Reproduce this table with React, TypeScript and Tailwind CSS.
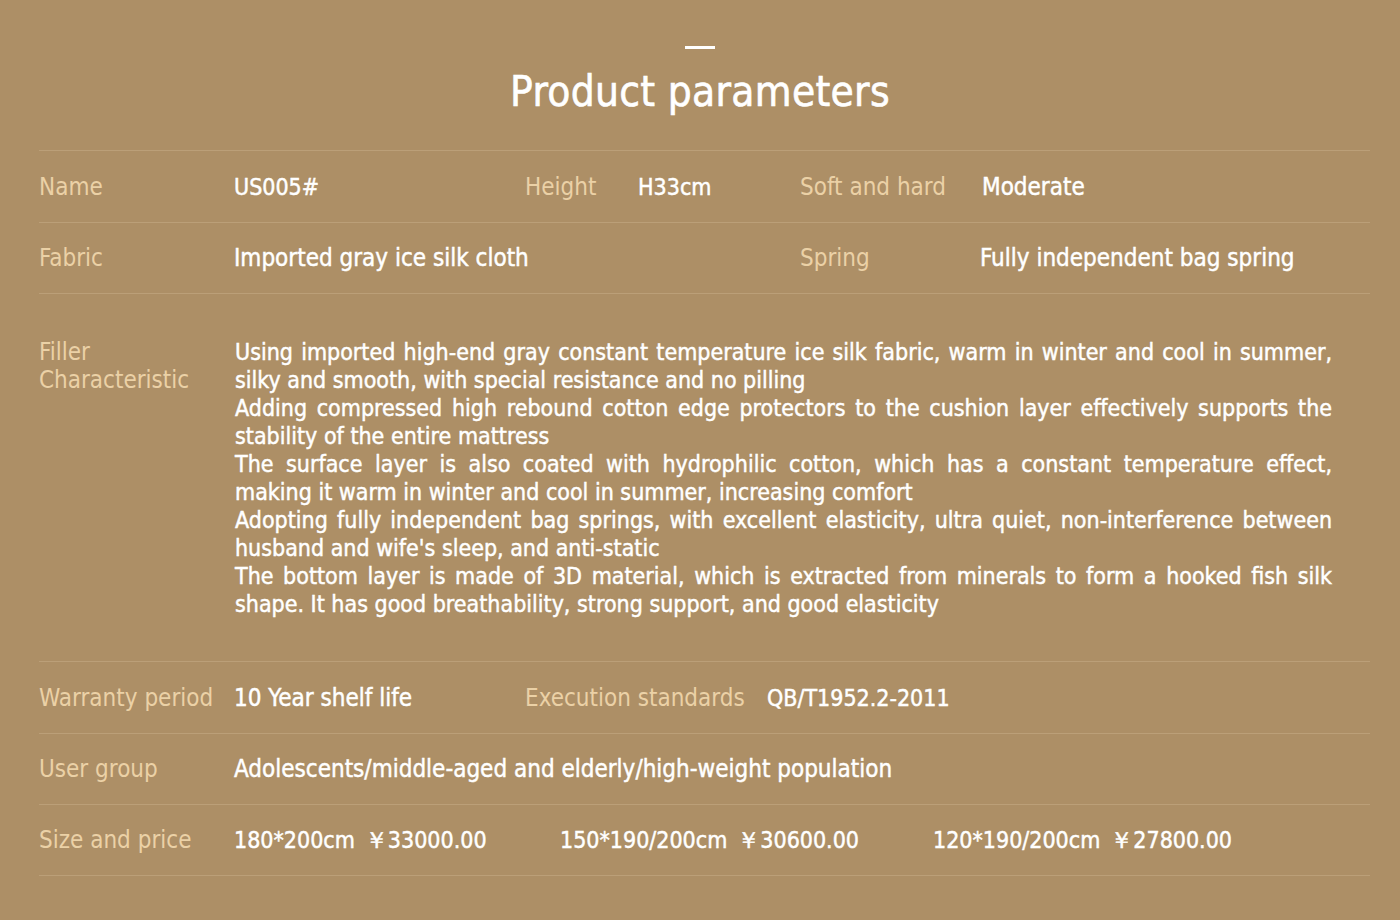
const label = 'text-[#ebd1a6] text-[24px]'
const value = 'text-white text-[24px] [-webkit-text-stroke:0.45px_white]'
const num = 'text-white text-[23px] [-webkit-text-stroke:0.45px_white]'

function Row({ children, className = '' }: { children: React.ReactNode; className?: string }) {
  return <div className={`flex items-center border-b border-[#bb9f78] ${className}`}>{children}</div>
}

// line breaks kept as in the original layout, full lines justified
const filler: [string, boolean][] = [
  ['Using imported high-end gray constant temperature ice silk fabric, warm in winter and cool in summer,', true],
  ['silky and smooth, with special resistance and no pilling', false],
  ['Adding compressed high rebound cotton edge protectors to the cushion layer effectively supports the', true],
  ['stability of the entire mattress', false],
  ['The surface layer is also coated with hydrophilic cotton, which has a constant temperature effect,', true],
  ['making it warm in winter and cool in summer, increasing comfort', false],
  ['Adopting fully independent bag springs, with excellent elasticity, ultra quiet, non-interference between', true],
  ["husband and wife's sleep, and anti-static", false],
  ['The bottom layer is made of 3D material, which is extracted from minerals to form a hooked fish silk', true],
  ['shape. It has good breathability, strong support, and good elasticity', false],
]

function Price({ size, price, w }: { size: string; price: string; w: string }) {
  return (
    <span className={`flex ${w} ${num}`}>
      <span>{size}</span>
      <span className="ml-[10px]">￥{price}</span>
    </span>
  )
}

export default function App() {
  return (
    <div
      className="w-[1400px] h-[920px] bg-[#ad8f66] leading-[28px]"
      style={{ fontFamily: '"DejaVu Sans Condensed", "Liberation Sans Narrow", Roboto, sans-serif' }}
    >
      <div className="flex flex-col items-center pt-[46px]">
        <div className="w-[30px] h-[3px] bg-white" />
        <h1 className="mt-[18px] text-[42px] leading-[50px] text-white tracking-[0.3px] [-webkit-text-stroke:0.6px_white]">
          Product parameters
        </h1>
      </div>

      <div className="ml-[39px] mr-[30px] mt-[33px] border-t border-[#bb9f78]">
        <Row className="h-[72px]">
          <span className={`w-[195px] ${label}`}>Name</span>
          <span className={`w-[291px] ${num}`}>US005#</span>
          <span className={`w-[113px] ${label}`}>Height</span>
          <span className={`w-[162px] ${num}`}>H33cm</span>
          <span className={`w-[182px] ${label}`}>Soft and hard</span>
          <span className={value}>Moderate</span>
        </Row>
        <Row className="h-[71px]">
          <span className={`w-[195px] ${label}`}>Fabric</span>
          <span className={`w-[566px] ${value}`}>Imported gray ice silk cloth</span>
          <span className={`w-[180px] ${label}`}>Spring</span>
          <span className={value}>Fully independent bag spring</span>
        </Row>
        <Row className="h-[368px]">
          <div className={`w-[196px] self-start pt-[44px] ${label}`}>
            <div>Filler</div>
            <div>Characteristic</div>
          </div>
          <div className="w-[1097px] text-white text-[23px] [-webkit-text-stroke:0.45px_white]">
            {filler.map(([t, full]) => (
              <p key={t} className={`whitespace-nowrap ${full ? 'text-justify [text-align-last:justify]' : ''}`}>
                {t}
              </p>
            ))}
          </div>
        </Row>
        <Row className="h-[72px]">
          <span className={`w-[195px] ${label}`}>Warranty period</span>
          <span className={`w-[291px] ${value}`}>10 Year shelf life</span>
          <span className={`w-[242px] ${label}`}>Execution standards</span>
          <span className={num}>QB/T1952.2-2011</span>
        </Row>
        <Row className="h-[71px]">
          <span className={`w-[195px] ${label}`}>User group</span>
          <span className={value}>Adolescents/middle-aged and elderly/high-weight population</span>
        </Row>
        <Row className="h-[71px]">
          <span className={`w-[195px] ${label}`}>Size and price</span>
          <Price size="180*200cm" price="33000.00" w="w-[326px]" />
          <Price size="150*190/200cm" price="30600.00" w="w-[373px]" />
          <Price size="120*190/200cm" price="27800.00" w="" />
        </Row>
      </div>
    </div>
  )
}
